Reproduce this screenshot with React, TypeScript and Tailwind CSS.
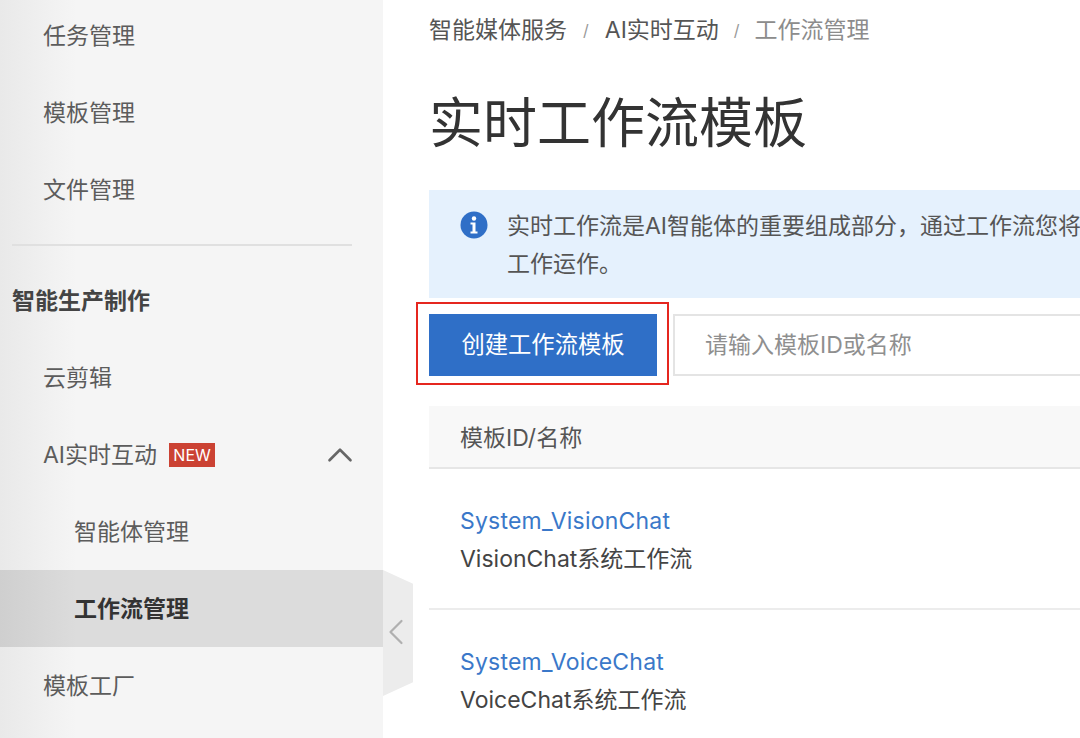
import { ChevronLeft, ChevronUp } from "lucide-react";

const font = "font-['Inter','Noto_Sans_CJK_SC',sans-serif]";

function NavItem({ label, active, sub }: { label: string; active?: boolean; sub?: boolean }) {
  return (
    <div
      className={`flex h-[77px] shrink-0 items-center pt-[1px] ${sub ? "pl-[74px]" : "pl-[43px]"} ${
        active ? "bg-[linear-gradient(90deg,#cfcfcf_0%,#dcdcdc_20%)] font-bold text-[#333]" : "text-[#5c5c5c]"
      }`}
    >
      {label}
    </div>
  );
}

function TemplateRow({ id, name }: { id: string; name: string }) {
  return (
    <div className="flex h-[141px] shrink-0 flex-col justify-center gap-[9px] border-b-2 border-[#ececec] pl-[31px] pt-[4px]">
      <div className="tracking-[0.2px] text-[#3a78c9] leading-[29px]">{id}</div>
      <div className="text-[#444] leading-[29px]">{name}</div>
    </div>
  );
}

export default function App() {
  return (
    <div className={`relative flex h-[738px] w-[1080px] overflow-hidden bg-white text-[23px] ${font}`}>
      <aside className="flex h-[741px] w-[383px] shrink-0 flex-col bg-[linear-gradient(90deg,#e9e9e9_0%,#f5f5f5_20%)] -mt-[3px]">
        <NavItem label="任务管理" />
        <NavItem label="模板管理" />
        <NavItem label="文件管理" />
        <div className="ml-[12px] mr-[31px] mt-[16px] mb-[16px] h-[2px] shrink-0 bg-[#e0e0e0]" />
        <div className="flex h-[77px] shrink-0 items-center pl-[12px] pt-[1px] font-bold text-[#444]">智能生产制作</div>
        <NavItem label="云剪辑" />
        <div className="flex h-[77px] shrink-0 items-center pl-[43px] pr-[22px] pt-[1px] text-[#5c5c5c]">
          <span>AI实时互动</span>
          <span className="ml-[12px] flex h-[24px] w-[46px] items-center justify-center bg-[#cb4233] text-[16px] text-white">
            NEW
          </span>
          <ChevronUp className="ml-auto h-[42px] w-[42px] text-[#666]" strokeWidth={1.5} />
        </div>
        <NavItem label="智能体管理" sub />
        <NavItem label="工作流管理" sub active />
        <NavItem label="模板工厂" />
      </aside>

      {/* collapse handle */}
      <div className="absolute left-[383px] top-[570px] flex h-[126px] w-[30px] items-center justify-center bg-[#ececec] [clip-path:polygon(0_0,100%_11%,100%_89%,0_100%)]">
        <ChevronLeft className="-mt-[2px] -ml-[4px] h-[44px] w-[44px] shrink-0 text-[#b0b0b0]" strokeWidth={1.2} />
      </div>

      <main className="min-w-0 flex-1 pl-[46px]">
        <div className="flex h-[60px] items-center whitespace-nowrap text-[#555]">
          <span>智能媒体服务</span>
          <span className="mx-[16px] text-[16px] text-[#999]">/</span>
          <span>AI实时互动</span>
          <span className="mx-[15px] text-[16px] text-[#999]">/</span>
          <span className="text-[#8c8c8c]">工作流管理</span>
        </div>
        <h1 className="mt-[2px] h-[128px] whitespace-nowrap text-[54px] leading-[124px] font-normal text-[#333]">
          实时工作流模板
        </h1>

        <div className="flex h-[108px] w-[900px] gap-[19px] bg-[#e5f1fd] pl-[31px] pt-[17px] leading-[38px] text-[#555]">
          <svg viewBox="0 0 28 28" className="mt-[4px] h-[28px] w-[28px] shrink-0">
            <circle cx="14" cy="14" r="13.5" fill="#2f6fc7" />
            <circle cx="14" cy="7.5" r="2.2" fill="#fff" />
            <path d="M10.5 11.5h5v9h2v2h-7v-2h2v-7h-2z" fill="#fff" />
          </svg>
          <p>
            <span className="block whitespace-nowrap">实时工作流是AI智能体的重要组成部分，通过工作流您将</span>
            <span className="block">工作运作。</span>
          </p>
        </div>

        <div className="mt-[16px] flex w-[900px] gap-[16px]">
          <button className="h-[62px] w-[228px] shrink-0 bg-[#2f6fc7] text-[23.3px] text-white">创建工作流模板</button>
          <input
            placeholder="请输入模板ID或名称"
            className="h-[62px] min-w-0 flex-1 border-2 border-[#e4e4e4] pl-[30px] outline-none placeholder:text-[#8f8f8f]"
          />
        </div>

        <div className="mt-[30px] flex h-[63px] items-center border-b-2 border-[#e6e6e6] bg-[#f8f8f8] pl-[31px] pt-[3px] text-[#555]">
          模板ID/名称
        </div>
        <div className="flex flex-col">
          <TemplateRow id="System_VisionChat" name="VisionChat系统工作流" />
          <TemplateRow id="System_VoiceChat" name="VoiceChat系统工作流" />
        </div>
      </main>

      {/* annotation around the create button */}
      <div className="pointer-events-none absolute left-[416px] top-[302px] h-[83px] w-[253px] border-2 border-[#e5261f]" />
    </div>
  );
}
